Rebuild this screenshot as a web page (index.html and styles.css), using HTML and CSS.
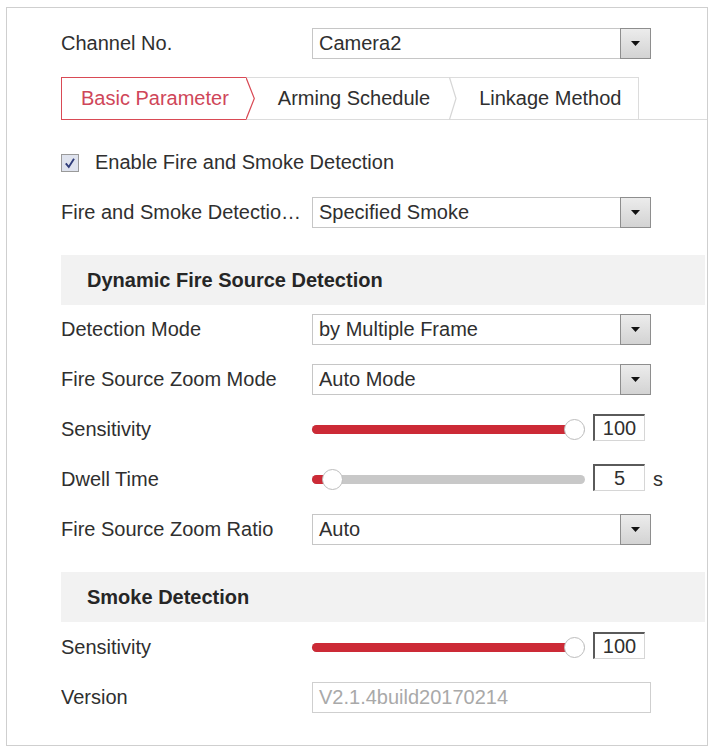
FILE: index.html
```html
<!DOCTYPE html>
<html>
<head>
<meta charset="utf-8">
<title>Fire and Smoke Detection</title>
<link rel="stylesheet" href="styles.css">
</head>
<body>
<div class="panel">
  <div class="row first">
    <div class="label">Channel No.</div>
    <div class="select">
      <span class="select-value">Camera2</span>
      <span class="select-btn"><svg width="9" height="5" viewBox="0 0 9 5"><polygon points="0,0 9,0 4.5,5" fill="#111"/></svg></span>
    </div>
  </div>

  <div class="tabs">
    <div class="tab active">Basic Parameter</div>
    <svg class="sep" width="9" height="43" viewBox="0 0 9 43">
      <line x1="0" y1="0.5" x2="9" y2="0.5" stroke="#dcdcdc"/>
      <line x1="0" y1="42.5" x2="9" y2="42.5" stroke="#dcdcdc"/>
      <polyline points="0,0.5 8.3,21.5 0,42.5" fill="#fff" stroke="#d94a55" stroke-width="1.2"/>
    </svg>
    <div class="tab tab-mid">Arming Schedule</div>
    <svg class="sep" width="9" height="43" viewBox="0 0 9 43">
      <line x1="0" y1="0.5" x2="9" y2="0.5" stroke="#dcdcdc"/>
      <line x1="0" y1="42.5" x2="9" y2="42.5" stroke="#dcdcdc"/>
      <polyline points="0.5,0.5 7,21.5 0.5,42.5" fill="none" stroke="#d6d6d6" stroke-width="1.2"/>
    </svg>
    <div class="tab tab-last">Linkage Method</div>
    <div class="tab-rest"></div>
  </div>

  <div class="row check-row">
    <span class="checkbox"><svg width="18" height="18" viewBox="0 0 18 18"><rect x="0.5" y="0.5" width="17" height="17" fill="#dfe3ee" stroke="#9a9a9a"/><path d="M4.8 9.3 L7.8 13 L13 4.8" fill="none" stroke="#2f3c7a" stroke-width="1.9"/></svg></span>
    <span>Enable Fire and Smoke Detection</span>
  </div>

  <div class="row">
    <div class="label">Fire and Smoke Detectio…</div>
    <div class="select">
      <span class="select-value">Specified Smoke</span>
      <span class="select-btn"><svg width="9" height="5" viewBox="0 0 9 5"><polygon points="0,0 9,0 4.5,5" fill="#111"/></svg></span>
    </div>
  </div>

  <div class="section-head">Dynamic Fire Source Detection</div>

  <div class="row after-head">
    <div class="label">Detection Mode</div>
    <div class="select">
      <span class="select-value">by Multiple Frame</span>
      <span class="select-btn"><svg width="9" height="5" viewBox="0 0 9 5"><polygon points="0,0 9,0 4.5,5" fill="#111"/></svg></span>
    </div>
  </div>

  <div class="row">
    <div class="label">Fire Source Zoom Mode</div>
    <div class="select">
      <span class="select-value">Auto Mode</span>
      <span class="select-btn"><svg width="9" height="5" viewBox="0 0 9 5"><polygon points="0,0 9,0 4.5,5" fill="#111"/></svg></span>
    </div>
  </div>

  <div class="row">
    <div class="label">Sensitivity</div>
    <div class="slider">
      <div class="track"></div>
      <div class="fill" style="width: 263px"></div>
      <div class="thumb" style="left: 252px"></div>
    </div>
    <div class="num">100</div>
  </div>

  <div class="row">
    <div class="label">Dwell Time</div>
    <div class="slider">
      <div class="track"></div>
      <div class="fill" style="width: 20px"></div>
      <div class="thumb" style="left: 10px"></div>
    </div>
    <div class="num">5</div>
    <span class="unit">s</span>
  </div>

  <div class="row">
    <div class="label">Fire Source Zoom Ratio</div>
    <div class="select">
      <span class="select-value">Auto</span>
      <span class="select-btn"><svg width="9" height="5" viewBox="0 0 9 5"><polygon points="0,0 9,0 4.5,5" fill="#111"/></svg></span>
    </div>
  </div>

  <div class="section-head">Smoke Detection</div>

  <div class="row after-head2">
    <div class="label">Sensitivity</div>
    <div class="slider">
      <div class="track"></div>
      <div class="fill" style="width: 263px"></div>
      <div class="thumb" style="left: 252px"></div>
    </div>
    <div class="num">100</div>
  </div>

  <div class="row">
    <div class="label">Version</div>
    <div class="text-input disabled">V2.1.4build20170214</div>
  </div>
</div>
</body>
</html>
```

FILE: styles.css
```css
* {
  box-sizing: border-box;
}

body {
  margin: 0;
  background: #fff;
  font-family: "Liberation Sans", Arial, sans-serif;
  font-size: 20px;
  color: #2f2f2f;
}

.panel {
  margin: 7px 0 0 6px;
  width: 702px;
  border: 1px solid #cfcfcf;
  padding: 20px 2px 32px 54px;
}

.row {
  display: flex;
  align-items: center;
  height: 31px;
  margin-top: 19px;
}

.row.first {
  margin-top: 0;
}

.row.check-row {
  margin-top: 27px;
}

.row.after-head {
  margin-top: 9px;
}

.row.after-head2 {
  margin-top: 10px;
}

.label {
  width: 251px;
  flex: none;
  white-space: nowrap;
  overflow: hidden;
}

.select {
  width: 339px;
  height: 31px;
  flex: none;
  border: 1px solid #c6c6c6;
  display: flex;
  align-items: center;
  background: #fff;
}

.select-value {
  flex: 1;
  padding-left: 6px;
  white-space: nowrap;
}

.select-btn {
  width: 31px;
  height: 31px;
  margin: -1px -1px -1px 0;
  border: 1px solid #8e8e8e;
  background: linear-gradient(#ececec, #d3d3d3);
  display: flex;
  align-items: center;
  justify-content: center;
}

.select-btn svg {
  display: block;
}

/* Tabs */
.tabs {
  display: flex;
  height: 43px;
  margin-top: 18px;
  margin-right: -2px;
}

.tab {
  height: 43px;
  display: flex;
  align-items: center;
  white-space: nowrap;
  border-top: 1px solid #dcdcdc;
  border-bottom: 1px solid #dcdcdc;
}

.tab.active {
  color: #cf4659;
  border: 1px solid #d94a55;
  border-right: none;
  padding: 0 17px 0 19px;
}

.tab.tab-mid {
  padding: 0 19px 0 23px;
}

.tab.tab-last {
  padding: 0 17px 0 21px;
  border-right: 1px solid #dcdcdc;
}

.sep {
  display: block;
  flex: none;
}

.tab-rest {
  flex: 1;
  border-bottom: 1px solid #dcdcdc;
}

/* Checkbox */
.checkbox {
  width: 18px;
  height: 18px;
  margin-left: 0;
  margin-right: 16px;
  flex: none;
}

.checkbox svg {
  display: block;
}

/* Section header */
.section-head {
  margin-top: 27px;
  height: 50px;
  background: #f2f2f2;
  display: flex;
  align-items: center;
  padding-left: 26px;
  font-weight: bold;
  color: #262626;
}

/* Slider */
.slider {
  position: relative;
  width: 273px;
  height: 31px;
  flex: none;
}

.track {
  position: absolute;
  left: 0;
  right: 0;
  top: 11px;
  height: 9px;
  border-radius: 5px;
  background: #c8c8c8;
}

.fill {
  position: absolute;
  left: 0;
  top: 11px;
  height: 9px;
  border-radius: 5px;
  background: #cc2a36;
}

.thumb {
  position: absolute;
  top: 5px;
  width: 21px;
  height: 21px;
  border-radius: 50%;
  background: #fff;
  border: 1px solid #bdbdbd;
}

.num {
  width: 52px;
  height: 27px;
  margin-left: 8px;
  margin-bottom: 4px;
  flex: none;
  border-top: 2px solid #5a5a5a;
  border-left: 2px solid #5a5a5a;
  border-right: 1px solid #d6d6d6;
  border-bottom: 1px solid #d6d6d6;
  display: flex;
  align-items: center;
  justify-content: center;
  background: #fff;
}

.unit {
  margin-left: 8px;
}

/* Disabled text input */
.text-input {
  width: 339px;
  height: 31px;
  flex: none;
  border: 1px solid #cfcfcf;
  display: flex;
  align-items: center;
  padding-left: 6px;
}

.text-input.disabled {
  color: #a9a9a9;
}
```
